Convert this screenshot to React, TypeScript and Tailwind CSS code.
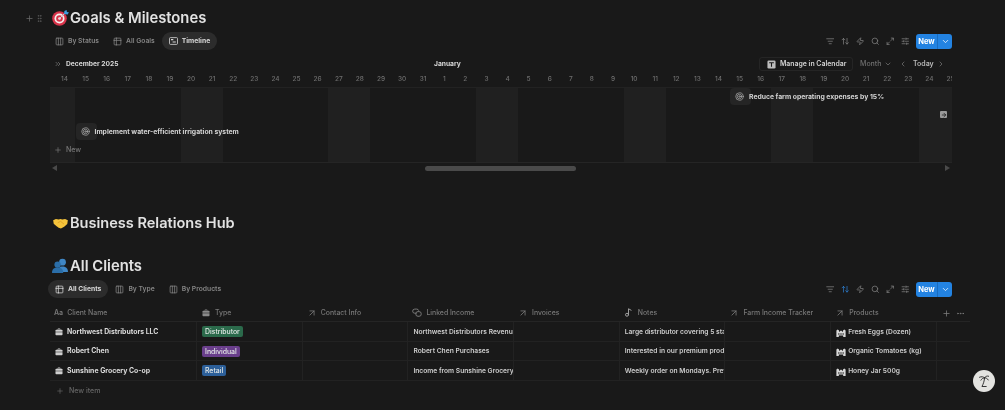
import {
  ArrowRight,
  ArrowUpDown,
  ArrowUpRight,
  ChevronDown,
  ChevronLeft,
  ChevronRight,
  ChevronsRight,
  Columns3,
  Ellipsis,
  GripVertical,
  ListFilter,
  Maximize2,
  Music2,
  Plus,
  Search,
  SlidersHorizontal,
  Table2,
  Target,
  Zap,
} from "lucide-react"

const days = [
  ...Array.from({ length: 18 }, (_, i) => i + 14),
  ...Array.from({ length: 25 }, (_, i) => i + 1),
]

// Dec 14 2025 is a Sunday, so weekends fall on index 0, 6, 7, 13, 14...
const isWeekend = (i: number) => i % 7 === 0 || i % 7 === 6

const clients = [
  {
    name: "Northwest Distributors LLC",
    type: "Distributor",
    tag: "bg-[#2b6a4b]",
    income: "Northwest Distributors Revenue",
    notes: "Large distributor covering 5 states",
    product: "Fresh Eggs (Dozen)",
    row: "h-[20px]",
  },
  {
    name: "Robert Chen",
    type: "Individual",
    tag: "bg-[#693e8b]",
    income: "Robert Chen Purchases",
    notes: "Interested in our premium products",
    product: "Organic Tomatoes (kg)",
    row: "h-[19px]",
  },
  {
    name: "Sunshine Grocery Co-op",
    type: "Retail",
    tag: "bg-[#2c5f99]",
    income: "Income from Sunshine Grocery",
    notes: "Weekly order on Mondays. Prefers",
    product: "Honey Jar 500g",
    row: "h-[20px]",
  },
]

function TargetEmoji() {
  return (
    <svg viewBox="0 0 18 18" className="w-[18px] h-[18px] shrink-0">
      <circle cx="7.5" cy="9.5" r="7.3" fill="#d8334a" />
      <circle cx="7.5" cy="9.5" r="5" fill="#f4f0ee" />
      <circle cx="7.5" cy="9.5" r="3.3" fill="#d8334a" />
      <circle cx="7.5" cy="9.5" r="1.3" fill="#f4f0ee" />
      <path d="M7.5 9.5 13 4" stroke="#c9ced6" strokeWidth="1" />
      <path d="M12 5l.4-3 2.2-1 .3 2 2 .3-1.2 2.2z" fill="#3f9bdc" />
    </svg>
  )
}

function HandshakeEmoji() {
  return (
    <svg viewBox="0 0 16 12" className="w-[15px] h-[11px] shrink-0">
      <path d="M0 2.5 3 1l3 .6L8 1l2 .6L13 1l3 1.5-.6 4-3.4 3L8.5 11.5 6 10.5 3.4 8.6.6 6.4z" fill="#f5c33b" />
      <path d="M5 5.2 8 3.6l3.8 3" stroke="#d99a1f" strokeWidth="0.8" fill="none" />
    </svg>
  )
}

function PeopleEmoji() {
  return (
    <svg viewBox="0 0 16 16" className="w-[16px] h-[16px] shrink-0">
      <circle cx="10.5" cy="4.2" r="3.4" fill="#3f86c4" />
      <path d="M6 14c0-4 1.6-5.6 4.5-5.6S16 10 16 14z" fill="#3f86c4" />
      <circle cx="5.6" cy="6.6" r="3.2" fill="#2b6ea8" />
      <path d="M0 15c0-3.8 2-5.4 5.6-5.4s5.6 1.6 5.6 5.4z" fill="#2b6ea8" />
    </svg>
  )
}

function BagIcon({ className }: { className: string }) {
  return (
    <svg viewBox="0 0 10 10" className={className} fill="currentColor">
      <path d="M3.2 2.2V1.5c0-.5.4-.9.9-.9h1.8c.5 0 .9.4.9.9v.7h-.9v-.6H4.1v.6z" />
      <path d="M.6 3.2c0-.5.4-1 1-1h6.8c.6 0 1 .5 1 1v1.5H.6z" />
      <path d="M.6 5.4h8.8v2.8c0 .6-.4 1-1 1H1.6c-.6 0-1-.4-1-1z" />
    </svg>
  )
}

function TimelineIcon() {
  return (
    <svg viewBox="0 0 10 9" className="w-[9px] h-[8px]" fill="none" stroke="currentColor" strokeWidth="0.9">
      <rect x="0.5" y="0.7" width="9" height="7.6" rx="1" />
      <path d="M2.2 3h2.6M4 5.6h3.6" strokeWidth="1.3" />
    </svg>
  )
}

function CalendarIcon() {
  return (
    <svg viewBox="0 0 10 10" className="w-[9px] h-[9px]">
      <rect x="0.5" y="0.5" width="9" height="9" rx="1.4" fill="#bdbdbd" />
      <path d="M2.4 3h5.2M5 3v4.6" stroke="#191919" strokeWidth="1.2" />
    </svg>
  )
}

function LinkIcon() {
  return (
    <svg viewBox="0 0 11 10" className="w-[10px] h-[9px]" fill="none" stroke="currentColor" strokeWidth="1.1">
      <path d="M5 5.8H3a2.3 2.3 0 0 1 0-4.6h2.2A2.3 2.3 0 0 1 7.4 3" />
      <rect x="4.2" y="4" width="6" height="5.2" rx="2.4" />
    </svg>
  )
}

function ProductIcon() {
  return (
    <svg viewBox="0 0 10 9" className="w-[10px] h-[9px] shrink-0" fill="#d8d8d8">
      <path d="M.4 9V2.4l1.3-1 1.3 1V4l2-1.6L7 4V2.4l1.3-1 1.3 1V9z" />
      <path d="M2 5.4h1.6v1.2H2zM4.2 5.4h1.6v1.2H4.2zM6.4 5.4H8v1.2H6.4zM2.8 7.4h4.4V9H2.8z" fill="#191919" />
    </svg>
  )
}

function PalmIcon() {
  return (
    <svg viewBox="0 0 14 16" className="w-[12px] h-[14px]" fill="none" stroke="#2b2b2b" strokeWidth="1.1" strokeLinecap="round">
      <path d="M7.6 4.6C7.4 8 6.4 11 4.6 14.4h5" />
      <path d="M7.6 4.4C6.2 2.8 4 2.6 1.8 3.6M7.6 4.4C6 4.4 4.2 5.4 3.4 7M7.6 4.4C8.6 2.6 10.4 1.8 12.4 2.4M7.6 4.4c1.6-.2 3.4.6 4.4 2.4" />
    </svg>
  )
}

function ViewTab({ icon, label, active }: { icon: React.ReactNode; label: string; active?: boolean }) {
  return (
    <div
      className={
        active
          ? "h-[18px] flex items-center gap-[4px] px-[7px] rounded-full bg-[#2c2c2c] text-[#d8d8d8] font-bold"
          : "h-[18px] flex items-center gap-[4px] px-[7px] rounded-full text-[#858585] font-semibold"
      }
    >
      {icon}
      <span className="text-[6.75px] leading-none pt-[1px]">{label}</span>
    </div>
  )
}

function Toolbar({ sortActive }: { sortActive?: boolean }) {
  return (
    <div className="flex items-center text-[#858585]">
      <div className="flex items-center gap-[6.5px] mr-[7px]">
        <ListFilter className="w-[8.5px] h-[8.5px]" />
        <ArrowUpDown className={sortActive ? "w-[8.5px] h-[8.5px] text-[#2f83d6]" : "w-[8.5px] h-[8.5px]"} />
        <Zap className="w-[8.5px] h-[8.5px]" />
        <Search className="w-[8.5px] h-[8.5px]" />
        <Maximize2 className="w-[8.5px] h-[8.5px]" />
        <SlidersHorizontal className="w-[8.5px] h-[8.5px]" />
      </div>
      <div className="h-[15px] w-[36px] flex rounded-[3px] bg-[#2383e2] text-white items-center">
        <span className="flex-1 text-center text-[7.5px] font-bold border-r border-[#1a6dc0] leading-[15px]">New</span>
        <div className="w-[14px] flex justify-center">
          <ChevronDown className="w-[9px] h-[9px]" />
        </div>
      </div>
    </div>
  )
}

function TimelineBar({ label, className }: { label: string; className: string }) {
  return (
    <div className={`absolute flex items-center ${className}`}>
      <div className="w-[21px] h-[17px] rounded-[4px] bg-[#252525] flex items-center pl-[5px]">
        <Target className="w-[9px] h-[9px] text-[#a8a8a8]" />
      </div>
      <span className="-ml-[2px] pt-[1px] text-[6.8px] font-bold text-[#d4d4d4] whitespace-nowrap">{label}</span>
    </div>
  )
}

function ColHead({ icon, label }: { icon: React.ReactNode; label: string }) {
  return (
    <div className="flex items-center gap-[4px] pl-[4px] min-w-0 text-[#787878]">
      <div className="w-[10px] flex justify-center">{icon}</div>
      <span className="text-[6.9px] font-medium whitespace-nowrap">{label}</span>
    </div>
  )
}

export default function App() {
  return (
    <div className="relative w-[1005px] h-[410px] overflow-hidden bg-[#191919] will-change-transform font-['Inter',sans-serif] pl-[50px] pr-[53px] pt-[9px]">
      {/* Goals heading */}
      <div className="h-[18px] flex items-center -ml-[25px]">
        <Plus className="w-[9px] h-[9px] text-[#6a6a6a]" />
        <GripVertical className="w-[9px] h-[9px] text-[#5c5c5c] ml-[1px]" />
        <div className="ml-[8px]">
          <TargetEmoji />
        </div>
        <h1 className="text-[14.8px] font-semibold text-[#e2e2e2] leading-none">Goals &amp; Milestones</h1>
      </div>

      <div className="mt-[5px] h-[18px] flex items-center justify-between">
        <div className="flex items-center -ml-[2px]">
          <ViewTab icon={<Columns3 className="w-[9px] h-[9px]" />} label="By Status" />
          <ViewTab icon={<Table2 className="w-[9px] h-[9px]" />} label="All Goals" />
          <ViewTab icon={<TimelineIcon />} label="Timeline" active />
        </div>
        <Toolbar />
      </div>

      {/* Timeline */}
      <div className="mt-[6px] h-[16px] flex items-center relative">
        <ChevronsRight className="w-[8px] h-[8px] text-[#7f7f7f] ml-[4px]" />
        <span className="ml-[4px] w-[52px] text-[6.7px] font-bold text-[#d8d8d8] whitespace-nowrap">December 2025</span>
        <span className="ml-[316px] text-[6.7px] font-bold text-[#d8d8d8]">January</span>
        <div className="ml-auto flex items-center text-[#7f7f7f]">
          <div className="h-[14px] w-[94px] flex items-center gap-[4px] pl-[7px] rounded-[3px] border border-[#252525] text-[#d4d4d4]">
            <CalendarIcon />
            <span className="text-[6.9px] font-semibold whitespace-nowrap">Manage in Calendar</span>
          </div>
          <span className="ml-[7px] w-[21px] text-[7px] font-medium text-[#6f6f6f]">Month</span>
          <ChevronDown className="ml-[3px] w-[8px] h-[8px]" />
          <ChevronLeft className="ml-[7px] w-[8px] h-[8px]" />
          <span className="ml-[6px] w-[19px] text-[7px] font-semibold text-[#b8b8b8]">Today</span>
          <ChevronRight className="ml-[5px] mr-[7px] w-[8px] h-[8px]" />
        </div>
      </div>
      <div className="relative">
        <div className="h-[15px] flex overflow-hidden border-b border-[#222222] box-content">
          {days.map((d, i) => (
            <div
              key={i}
              className={
                i === 0
                  ? "w-[25.1px] pl-[4px] shrink-0 text-center text-[6.5px] font-medium leading-[14px] text-[#6e6e6e]"
                  : "w-[21.1px] shrink-0 text-center text-[6.5px] font-medium leading-[14px] text-[#6e6e6e]"
              }
            >
              {d}
            </div>
          ))}
        </div>
        <div className="h-[74px] flex overflow-hidden border-b border-[#252525] box-content">
          {days.map((_, i) => (
            <div
              key={i}
              className={`${i === 0 ? "w-[25.1px]" : "w-[21.1px]"} shrink-0 ${isWeekend(i) ? "bg-[#202020]" : ""}`}
            />
          ))}
        </div>
        <TimelineBar label="Reduce farm operating expenses by 15%" className="left-[680px] top-[16px]" />
        <TimelineBar label="Implement water-efficient irrigation system" className="left-[25.5px] top-[51px]" />
        <div className="absolute left-[890px] top-[39px] w-[7px] h-[7px] rounded-[1px] bg-[#9a9a9a] flex items-center justify-center">
          <ArrowRight className="w-[6px] h-[6px] text-[#191919]" strokeWidth={3} />
        </div>
        <div className="absolute left-[4px] top-[73px] flex items-center gap-[4px] text-[#787878]">
          <Plus className="w-[8px] h-[8px]" />
          <span className="text-[7px] font-medium">New</span>
        </div>
      </div>
      <div className="h-[10px] flex items-center relative">
        <div className="ml-[2px] w-0 h-0 border-y-[3.5px] border-y-transparent border-r-[5px] border-r-[#4a4a4a]" />
        <div className="ml-[368px] w-[151px] h-[5px] rounded-full bg-[#4a4a4a]" />
        <div className="ml-auto mr-[2px] w-0 h-0 border-y-[3.5px] border-y-transparent border-l-[5px] border-l-[#4a4a4a]" />
      </div>

      {/* Business Relations Hub */}
      <div className="mt-[40px] h-[20px] flex items-center gap-[2px] ml-[3px]">
        <HandshakeEmoji />
        <h2 className="text-[14.55px] font-semibold text-[#e2e2e2] leading-none">Business Relations Hub</h2>
      </div>

      <div className="mt-[23px] h-[20px] flex items-center gap-[2px] ml-[2px]">
        <PeopleEmoji />
        <h2 className="text-[14.8px] font-semibold text-[#e2e2e2] leading-none">All Clients</h2>
      </div>

      <div className="mt-[4px] h-[18px] flex items-center justify-between">
        <div className="flex items-center -ml-[2px]">
          <ViewTab icon={<Table2 className="w-[9px] h-[9px]" />} label="All Clients" active />
          <ViewTab icon={<Columns3 className="w-[9px] h-[9px]" />} label="By Type" />
          <ViewTab icon={<Columns3 className="w-[9px] h-[9px]" />} label="By Products" />
        </div>
        <Toolbar sortActive />
      </div>

      {/* Clients table */}
      <div className="mt-[5px] w-[920px]">
        <div className="h-[19px] pt-[2px] grid grid-cols-[147px_repeat(7,105.7px)_33px] items-center border-b border-[#252525]">
          <div className="flex items-center gap-[4px] pl-[4px] text-[#787878]">
            <span className="text-[7px] font-semibold">Aa</span>
            <span className="text-[6.9px] font-medium">Client Name</span>
          </div>
          <ColHead icon={<BagIcon className="w-[8px] h-[8px] text-[#8a8a8a]" />} label="Type" />
          <ColHead icon={<ArrowUpRight className="w-[10px] h-[10px]" />} label="Contact Info" />
          <ColHead icon={<LinkIcon />} label="Linked Income" />
          <ColHead icon={<ArrowUpRight className="w-[10px] h-[10px]" />} label="Invoices" />
          <ColHead icon={<Music2 className="w-[9px] h-[9px] text-[#a0a0a0]" strokeWidth={2.6} />} label="Notes" />
          <ColHead icon={<ArrowUpRight className="w-[10px] h-[10px]" />} label="Farm Income Tracker" />
          <ColHead icon={<ArrowUpRight className="w-[10px] h-[10px]" />} label="Products" />
          <div className="flex items-center justify-center gap-[5px] text-[#7f7f7f]">
            <Plus className="w-[9px] h-[9px]" />
            <Ellipsis className="w-[9px] h-[9px]" />
          </div>
        </div>
        {clients.map((c) => (
          <div
            key={c.name}
            className={`${c.row} grid grid-cols-[147px_repeat(7,105.7px)_33px] border-b border-[#222222] text-[6.7px] text-[#cdcdcd]`}
          >
            <div className="flex items-center gap-[4px] pl-[5px] pt-[1px] border-r border-[#222222] text-[6.9px] font-bold text-[#dcdcdc]">
              <BagIcon className="w-[8px] h-[8px] text-[#cfcfcf]" />
              <span className="whitespace-nowrap">{c.name}</span>
            </div>
            <div className="flex items-center pl-[5px] border-r border-[#222222]">
              <span className={`px-[3px] h-[11px] leading-[11px] rounded-[2px] text-[6.9px] font-medium text-[#e4e8e6] ${c.tag}`}>{c.type}</span>
            </div>
            <div className="border-r border-[#222222]" />
            <div className="flex items-center pl-[5px] pt-[1px] border-r border-[#222222] overflow-hidden font-semibold whitespace-nowrap">{c.income}</div>
            <div className="border-r border-[#222222]" />
            <div className="flex items-center pl-[5px] pt-[1px] border-r border-[#222222] overflow-hidden font-semibold whitespace-nowrap">{c.notes}</div>
            <div className="border-r border-[#222222]" />
            <div className="flex items-center gap-[2px] pl-[5px] pt-[1px] border-r border-[#222222] font-semibold whitespace-nowrap">
              <ProductIcon />
              <span>{c.product}</span>
            </div>
            <div />
          </div>
        ))}
        <div className="h-[20px] flex items-center gap-[5px] pl-[6px] text-[#666666]">
          <Plus className="w-[8px] h-[8px]" />
          <span className="text-[7px] font-medium">New item</span>
        </div>
      </div>

      {/* Help button */}
      <div className="absolute left-[973px] top-[370px] w-[22px] h-[22px] rounded-full bg-[#e3e3e0] flex items-center justify-center">
        <PalmIcon />
      </div>
    </div>
  )
}
